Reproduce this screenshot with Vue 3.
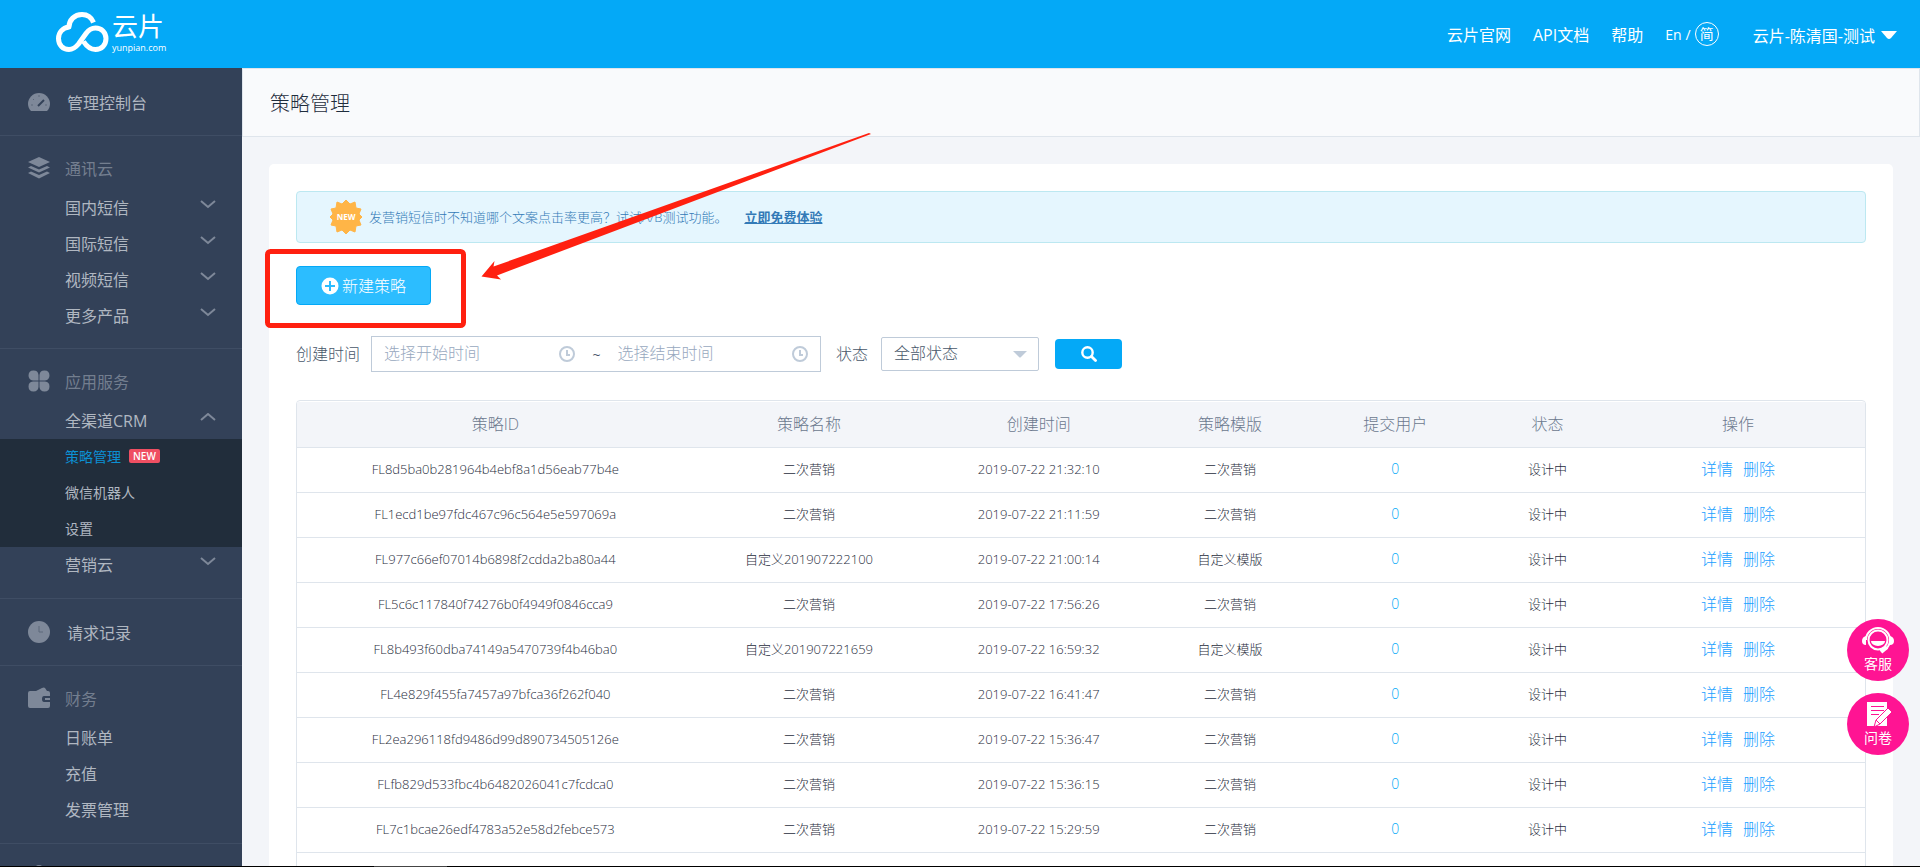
<script setup>
import { ref } from 'vue'

const start = ref('')
const end = ref('')
const status = ref('all')

const columns = [
  { key: 'id', label: '策略ID' },
  { key: 'name', label: '策略名称' },
  { key: 'time', label: '创建时间' },
  { key: 'template', label: '策略模版' },
  { key: 'user', label: '提交用户' },
  { key: 'status', label: '状态' },
  { key: 'action', label: '操作' },
]

const rows = [
  ['FL8d5ba0b281964b4ebf8a1d56eab77b4e', '二次营销', '2019-07-22 21:32:10', '二次营销'],
  ['FL1ecd1be97fdc467c96c564e5e597069a', '二次营销', '2019-07-22 21:11:59', '二次营销'],
  ['FL977c66ef07014b6898f2cdda2ba80a44', '自定义201907222100', '2019-07-22 21:00:14', '自定义模版'],
  ['FL5c6c117840f74276b0f4949f0846cca9', '二次营销', '2019-07-22 17:56:26', '二次营销'],
  ['FL8b493f60dba74149a5470739f4b46ba0', '自定义201907221659', '2019-07-22 16:59:32', '自定义模版'],
  ['FL4e829f455fa7457a97bfca36f262f040', '二次营销', '2019-07-22 16:41:47', '二次营销'],
  ['FL2ea296118fd9486d99d890734505126e', '二次营销', '2019-07-22 15:36:47', '二次营销'],
  ['FLfb829d533fbc4b6482026041c7fcdca0', '二次营销', '2019-07-22 15:36:15', '二次营销'],
  ['FL7c1bcae26edf4783a52e58d2febce573', '二次营销', '2019-07-22 15:29:59', '二次营销'],
]
</script>

<template>
  <div class="app">
    <header class="topbar">
      <a class="logo" href="#" aria-label="云片">
        <svg class="cloud" viewBox="0 0 54 42" fill="none" stroke="#fff" stroke-width="5" aria-hidden="true">
          <path d="M38.500 11.500C36.500 6.500 32 3.500 27 3.500C19.500 3.500 14 9 14 16C7.500 17 3.500 21.500 3.500 27.500C3.500 34 8 38.500 14 38.500C18.500 38.500 21 36 23.500 33L31 22.500C33.500 19 36.500 17 40.500 17C46.500 17 51 21.500 51 27.500C51 34 46.500 38.500 40.500 38.500C35.500 38.500 32 36 28.500 30.500" stroke-linejoin="round" />
        </svg>
        <span class="brand">
          <span class="brand-name">云片</span>
          <span class="brand-url">yunpian.com</span>
        </span>
      </a>
      <nav class="topnav">
        <a href="#">云片官网</a>
        <a href="#">API文档</a>
        <a href="#">帮助</a>
        <span class="lang"><a href="#">En</a> / <a class="lang-on" href="#">简</a></span>
        <button class="account" type="button">
          云片-陈清国-测试
          <svg width="16" height="9" viewBox="0 0 16 9" aria-hidden="true"><path d="M0 0H16L10 7Q8 9 6 7Z" fill="#fff" /></svg>
        </button>
      </nav>
    </header>

    <div class="body">
      <aside class="sidebar">
        <section class="group single">
          <a class="head bright" href="#">
            <svg class="icon" viewBox="0 0 22 22" aria-hidden="true">
              <path d="M3 20C1 18 0 15.500 0 13A11 11 0 0 1 22 13C22 15.500 21 18 19 20Z" fill="#7e8899" />
              <path d="M10 15L16 9" stroke="#334158" stroke-width="2" />
              <path d="M3 14H5M17 14H19M11 4V6M5 8L6 9" stroke="#5c687b" stroke-width="1" />
            </svg>
            管理控制台
          </a>
        </section>

        <section class="group">
          <div class="head">
            <svg class="icon" viewBox="0 0 22 22" aria-hidden="true">
              <path d="M11 0L22 5L11 10L0 5Z" fill="#7e8899" />
              <path d="M0 10.500L3 9L11 12.500L19 9L22 10.500L11 15.500ZM0 16L3 14.500L11 18L19 14.500L22 16L11 21.500Z" fill="#7e8899" />
            </svg>
            通讯云
          </div>
          <a v-for="item in ['国内短信', '国际短信', '视频短信', '更多产品']" :key="item" class="item" href="#">
            {{ item }}
            <svg class="chevron" viewBox="0 0 16 9" aria-hidden="true"><path d="M1 1L8 7L15 1" /></svg>
          </a>
        </section>

        <section class="group spaced">
          <div class="head">
            <svg class="icon" viewBox="0 0 22 22" fill="#7e8899" aria-hidden="true">
              <path d="M10.500 10.500H5A5 5 0 1 1 10.500 5ZM11.500 10.500V5A5 5 0 1 1 17 10.500ZM10.500 11.500V17A5 5 0 1 1 5 11.500ZM11.500 11.500H17A5 5 0 1 1 11.500 17Z" />
            </svg>
            应用服务
          </div>
          <a class="item" href="#">
            全渠道CRM
            <svg class="chevron" viewBox="0 0 16 9" aria-hidden="true"><path d="M1 7L8 1L15 7" /></svg>
          </a>
          <div class="submenu">
            <a class="subitem active" href="#">策略管理<span class="badge">NEW</span></a>
            <a class="subitem" href="#">微信机器人</a>
            <a class="subitem" href="#">设置</a>
          </div>
          <a class="item" href="#">
            营销云
            <svg class="chevron" viewBox="0 0 16 9" aria-hidden="true"><path d="M1 1L8 7L15 1" /></svg>
          </a>
        </section>

        <section class="group single">
          <a class="head bright" href="#">
            <svg class="icon" viewBox="0 0 22 22" aria-hidden="true">
              <circle cx="11" cy="11" r="11" fill="#7e8899" />
              <path d="M11 5V11H15" fill="none" stroke="#5c687b" stroke-width="1" />
            </svg>
            请求记录
          </a>
        </section>

        <section class="group spaced">
          <div class="head">
            <svg class="icon" viewBox="0 0 22 22" aria-hidden="true">
              <path d="M2 4H8L14 1Q16 0 17 1L19 4H20Q22 4 22 6V9H16Q14 9 14 12Q14 15 16 15H22V19Q22 21 20 21H2Q0 21 0 19V6Q0 4 2 4Z" fill="#7e8899" />
              <path d="M17 11H22V13H17Z" fill="#7e8899" />
            </svg>
            财务
          </div>
          <a v-for="item in ['日账单', '充值', '发票管理']" :key="item" class="item" href="#">{{ item }}</a>
        </section>

        <section class="group last">
          <div class="head">
            <svg class="icon" viewBox="0 0 22 22" aria-hidden="true">
              <circle cx="11" cy="5" r="5" fill="#7e8899" />
              <path d="M0 22Q0 12 11 12T22 22Z" fill="#7e8899" />
            </svg>
          </div>
        </section>
      </aside>

      <main class="content">
        <div class="titlebar"><h1>策略管理</h1></div>

        <div class="card">
          <div class="notice">
            <svg class="burst" viewBox="0 0 32 34" aria-hidden="true">
              <path d="M16 0L20 4L25 2L26 8L31 9L29 14L32 17L29 20L31 25L26 26L25 32L20 30L16 34L12 30L7 32L6 26L1 25L3 20L0 17L3 14L1 9L6 8L7 2L12 4Z" fill="#ffb547" stroke="#ffb547" stroke-linejoin="round" />
              <text x="16" y="20" text-anchor="middle">NEW</text>
            </svg>
            <span>发营销短信时不知道哪个文案点击率更高？试试A/B测试功能。</span>
            <a href="#">立即免费体验</a>
          </div>

          <button class="create" type="button">
            <svg width="18" height="18" viewBox="0 0 18 18" aria-hidden="true">
              <circle cx="9" cy="9" r="8.500" fill="#fff" />
              <path d="M9 4V14M4 9H14" stroke="#2cbdff" stroke-width="2" />
            </svg>
            <span>新建策略</span>
          </button>

          <form class="filters" @submit.prevent>
            <label for="start">创建时间</label>
            <div class="range">
              <input id="start" v-model="start" type="text" placeholder="选择开始时间" />
              <svg class="clock" viewBox="0 0 18 18" aria-hidden="true"><circle cx="9" cy="9" r="7" /><path d="M9 5V10H12" /></svg>
              <span class="tilde">~</span>
              <input v-model="end" type="text" placeholder="选择结束时间" aria-label="结束时间" />
              <svg class="clock" viewBox="0 0 18 18" aria-hidden="true"><circle cx="9" cy="9" r="7" /><path d="M9 5V10H12" /></svg>
            </div>
            <label class="status-label" for="status">状态</label>
            <div class="select">
              <select id="status" v-model="status">
                <option value="all">全部状态</option>
              </select>
              <svg viewBox="0 0 14 7" aria-hidden="true"><path d="M0 0H14L8 6Q7 7 6 6Z" fill="#bfcbd9" /></svg>
            </div>
            <button class="search" type="submit" aria-label="搜索">
              <svg width="16" height="16" viewBox="0 0 16 16" fill="none" stroke="#fff" aria-hidden="true">
                <circle cx="6.500" cy="6.500" r="5.200" stroke-width="2.400" />
                <path d="M10.500 10.500L14.500 14.500" stroke-width="2.800" stroke-linecap="round" />
              </svg>
            </button>
          </form>

          <div class="table-wrap">
            <table>
              <thead>
                <tr>
                  <th v-for="c in columns" :key="c.key" :class="'c-' + c.key" scope="col">{{ c.label }}</th>
                </tr>
              </thead>
              <tbody>
                <tr v-for="row in rows" :key="row[0]">
                  <td v-for="(cell, i) in row" :key="i">{{ cell }}</td>
                  <td><a class="count" href="#">0</a></td>
                  <td>设计中</td>
                  <td class="actions"><a href="#">详情</a><a href="#">删除</a></td>
                </tr>
                <tr><td colspan="7"></td></tr>
              </tbody>
            </table>
          </div>
        </div>
      </main>
    </div>

    <svg class="annotation" viewBox="0 0 608 198" aria-hidden="true">
      <rect x="2.500" y="119.500" width="196" height="74" rx="3" fill="none" stroke="#ff2010" stroke-width="5" />
      <path d="M216.500 144.500L229.500 129L228.500 134.500L604 1L606 2L232 143.500L236 147.500Z" fill="#ff2010" />
    </svg>

    <div class="floats">
      <button type="button">
        <svg width="32" height="28" viewBox="0 0 32 28" fill="none" stroke="#fff" aria-hidden="true">
          <path d="M4 14A12 12 0 0 1 28 14Q28 19 24 23" stroke-width="2" />
          <circle cx="16" cy="14" r="9.500" stroke-width="2" />
          <path d="M9 15H23A7 5 0 0 1 9 15Z" fill="#fff" stroke="none" />
          <path d="M4 10Q0 11 0 15T4 19ZM28 10Q32 11 32 15T28 19Z" fill="#fff" stroke="none" />
          <path d="M25 21L19 26" stroke-width="4" />
        </svg>
        客服
      </button>
      <button type="button">
        <svg width="28" height="28" viewBox="0 0 28 28" aria-hidden="true">
          <path d="M3 2H23V26H3Z" fill="#fff" />
          <path d="M7 6.500H20M7 10.500H20M7 14.500H15" stroke="#ff1493" stroke-width="1" />
          <path d="M10 27L12 20L24 8L28 12L16 24Z" fill="#fff" stroke="#ff1493" stroke-width="1" />
          <path d="M12 20L16 24" stroke="#ff1493" stroke-width="1" />
        </svg>
        问卷
      </button>
    </div>
    <div class="edge"><i></i></div>
  </div>
</template>

<style>
body {
  margin: 0;
  overflow: hidden;
}
</style>

<style scoped>
* {
  box-sizing: border-box;
}
.app {
  position: relative;
  display: flex;
  flex-direction: column;
  height: 100vh;
  overflow: hidden;
  background: #f3f5f9;
  color: #48576a;
  font-family: "Open Sans", "Noto Sans CJK SC", sans-serif;
  font-size: 16px;
  font-weight: 300;
}
a {
  color: inherit;
  text-decoration: none;
}
button,
input,
select {
  font: inherit;
  color: inherit;
}
button {
  cursor: pointer;
}

/* top bar */
.topbar {
  flex: none;
  display: flex;
  justify-content: space-between;
  height: 68px;
  padding: 0 23px 0 55px;
  background: #04a9f7;
  color: #fff;
}
.logo {
  display: flex;
  align-items: flex-start;
  gap: 3px;
  padding-top: 11px;
}
.cloud {
  width: 54px;
  height: 42px;
}
.brand {
  display: flex;
  flex-direction: column;
  gap: 2px;
}
.brand-name {
  font-size: 26px;
  font-weight: 400;
  line-height: 30px;
}
.brand-url {
  font-size: 9px;
  font-weight: 400;
  line-height: 9px;
}
.topnav {
  display: flex;
  align-items: center;
  gap: 22px;
  font-weight: 400;
}
.lang {
  display: flex;
  align-items: center;
  gap: 4px;
  font-size: 14px;
}
.lang-on {
  width: 24px;
  height: 24px;
  border: 1px solid #fff;
  border-radius: 50%;
  line-height: 22px;
  text-align: center;
}
.account {
  display: flex;
  align-items: center;
  gap: 6px;
  margin-left: 12px;
  padding: 2px 0 0;
  border: 0;
  background: none;
}

/* layout */
.body {
  flex: 1;
  display: flex;
  min-height: 0;
}
.sidebar {
  flex: none;
  width: 242px;
  padding-top: 1px;
  overflow: hidden;
  background: #334158;
  color: #b0b7c1;
  font-weight: 400;
}
.content {
  flex: 1;
  min-width: 0;
}

/* sidebar */
.group {
  padding: 15px 0 14px;
  border-bottom: 1px solid #3f4d64;
}
.head {
  display: flex;
  align-items: center;
  gap: 15px;
  height: 36px;
  margin-bottom: 3px;
  padding-bottom: 2px;
  padding-left: 28px;
  color: #737e8f;
}
.bright {
  gap: 17px;
  margin: 0;
  color: #b0b7c1;
}
.single {
  padding: 16px 0 14px;
}
.spaced {
  padding-bottom: 15px;
}
.last {
  border: 0;
}
.icon {
  flex: none;
  width: 22px;
  height: 22px;
}
.item {
  display: flex;
  align-items: center;
  justify-content: space-between;
  height: 36px;
  padding: 0 26px 2px 65px;
}
.chevron {
  width: 16px;
  height: 9px;
  margin-bottom: 6px;
  fill: none;
  stroke: #7e8899;
  stroke-width: 2;
}
.submenu {
  background: #212d3b;
  font-size: 14px;
}
.subitem {
  display: flex;
  align-items: center;
  gap: 8px;
  height: 36px;
  padding: 0 0 2px 65px;
}
.active {
  color: #0c90d4;
}
.badge {
  padding: 0 4px;
  border-radius: 2px;
  background: #ef4f62;
  color: #fff;
  font-size: 10px;
  font-weight: 600;
  line-height: 14px;
}

/* title */
.titlebar {
  display: flex;
  align-items: center;
  height: 69px;
  padding-left: 27px;
  border: 1px solid #dfe5ec;
  background: #f9fafc;
}
h1 {
  margin: 0;
  color: #1f2d3d;
  font-size: 20px;
  font-weight: 300;
}

/* card */
.card {
  margin: 27px 27px 0;
  padding: 27px 27px 60px;
  border-radius: 5px;
  background: #fff;
}
.notice {
  display: flex;
  align-items: center;
  gap: 7px;
  height: 52px;
  padding-left: 33px;
  border: 1px solid #bce8f1;
  border-radius: 4px;
  background: #e5f6fe;
  color: #337ab7;
  font-size: 13px;
}
.notice span,
.notice a {
  padding-bottom: 2px;
}
.burst {
  width: 32px;
  height: 34px;
}
.burst text {
  fill: #fff;
  font-size: 8px;
  font-weight: 700;
}
.notice a {
  margin-left: 10px;
  font-weight: 700;
  text-decoration: underline;
}
.create {
  display: flex;
  align-items: center;
  justify-content: center;
  gap: 3px;
  width: 135px;
  height: 39px;
  margin-top: 23px;
  padding: 0;
  border: 1px solid #04a9f7;
  border-radius: 4px;
  background: #2cbdff;
  color: #fff;
}
.create span {
  padding-bottom: 2px;
}
.filters {
  display: flex;
  align-items: center;
  margin-top: 31px;
}
.filters label {
  padding-bottom: 2px;
}
.range {
  display: flex;
  align-items: center;
  width: 450px;
  height: 36px;
  margin-left: 11px;
  padding: 0 11px 0 12px;
  border: 1px solid #bfcbd9;
}
.range input {
  flex: 1;
  min-width: 0;
  padding: 0 0 2px;
  border: 0;
  outline: 0;
  background: none;
}
.range input::placeholder {
  color: #97a8be;
  opacity: 1;
}
.clock {
  width: 18px;
  height: 18px;
  fill: none;
  stroke: #bfcbd9;
  stroke-width: 2;
}
.tilde {
  width: 42px;
  text-align: center;
  font-size: 14px;
  font-weight: 400;
}
.status-label {
  margin: 0 13px 0 15px;
}
.select {
  position: relative;
  width: 158px;
}
.select select {
  width: 100%;
  height: 34px;
  padding: 0 12px 2px;
  border: 1px solid #bfcbd9;
  border-radius: 2px;
  background: #fff;
  appearance: none;
}
.select svg {
  position: absolute;
  top: 14px;
  right: 12px;
  width: 14px;
  height: 7px;
  pointer-events: none;
}
.search {
  display: flex;
  align-items: center;
  justify-content: center;
  width: 67px;
  height: 30px;
  margin-left: 16px;
  padding: 0;
  border: 0;
  border-radius: 4px;
  background: #04a9f7;
}

/* table */
.table-wrap {
  margin-top: 28px;
  padding-top: 1px;
  border: 1px solid #dfe5ec;
  border-radius: 4px;
}
table {
  width: 100%;
  border-collapse: collapse;
  table-layout: fixed;
  text-align: center;
}
th {
  height: 45px;
  padding: 0 0 2px;
  border-bottom: 1px solid #dfe5ec;
  background: #f3f5f9;
  color: #6b788e;
  font-weight: 300;
}
td {
  height: 45px;
  padding: 0 0 2px;
  border-bottom: 1px solid #dfe5ec;
  color: #1f2d3d;
  font-size: 13px;
}
.c-id {
  width: 25.3%;
}
.c-name {
  width: 14.7%;
}
.c-time {
  width: 14.6%;
}
.c-template {
  width: 9.8%;
}
.c-user {
  width: 11.3%;
}
.c-status {
  width: 8.1%;
}
.count {
  color: #04a9f7;
  font-size: 14px;
}
.actions {
  padding-bottom: 4px;
  color: #20a0ff;
  font-size: 16px;
}
.actions a + a {
  margin-left: 10px;
}

/* overlays */
.annotation {
  position: absolute;
  top: 132px;
  left: 265px;
  width: 608px;
  height: 198px;
  pointer-events: none;
}
.floats {
  position: absolute;
  right: 11px;
  bottom: 112px;
  display: flex;
  flex-direction: column;
  gap: 12px;
}
.floats button {
  display: flex;
  flex-direction: column;
  align-items: center;
  width: 62px;
  height: 62px;
  padding: 7px 0 0;
  border: 0;
  border-radius: 50%;
  background: #ff1493;
  color: #fff;
  font-size: 14px;
  font-weight: 400;
  line-height: 20px;
}
.edge {
  position: absolute;
  right: 0;
  bottom: 0;
  left: 0;
  height: 1px;
  padding-left: 374px;
  background: #000;
}
.edge i {
  display: block;
  width: 73px;
  height: 1px;
  background: #444;
}
</style>
